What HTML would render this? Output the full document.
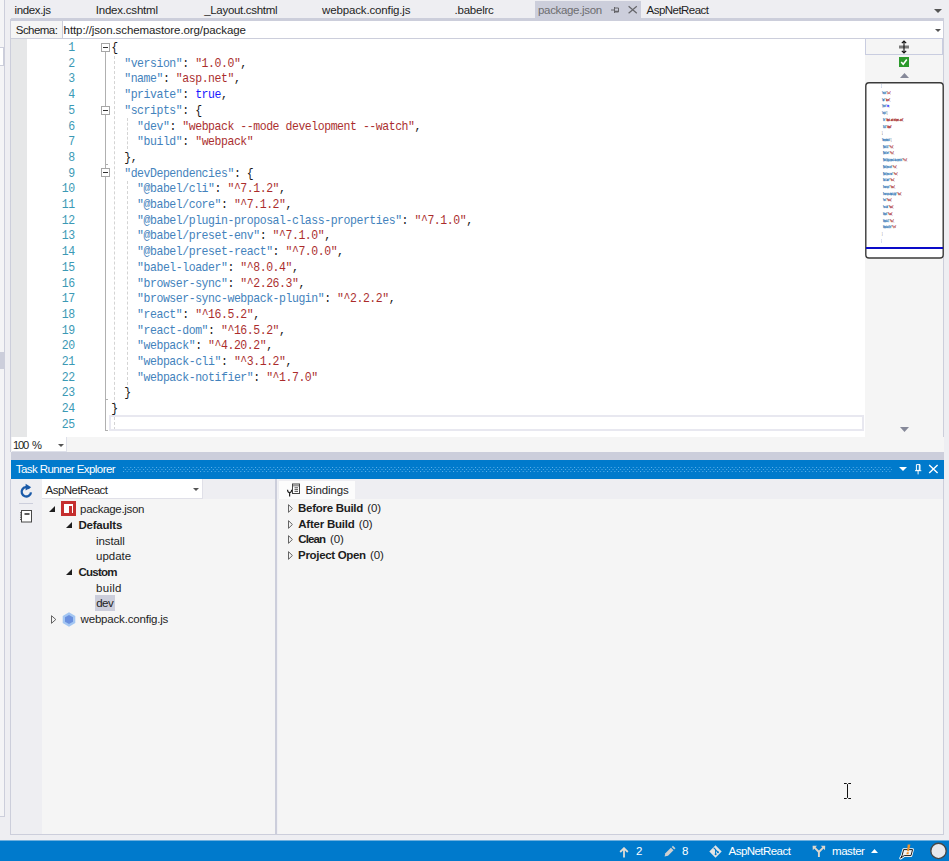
<!DOCTYPE html>
<html>
<head>
<meta charset="utf-8">
<title>package.json - AspNetReact</title>
<style>
html,body{margin:0;padding:0;}
body{width:949px;height:861px;overflow:hidden;position:relative;background:#eeeef2;font-family:"Liberation Sans",sans-serif;font-size:12px;color:#1e1e1e;}
.a{position:absolute;}
.t{position:absolute;white-space:nowrap;line-height:16px;height:16px;font-size:11.5px;}
.b{font-weight:bold;}
/* editor */
#editor{left:11px;top:39px;width:854px;height:398px;background:#fff;overflow:hidden;}
.cl,.ln{position:absolute;font-family:"Liberation Mono",monospace;font-size:11.5px;line-height:16px;height:16px;white-space:pre;letter-spacing:-0.45px;transform:scaleY(1.09);transform-origin:0 50%;}
.cl{left:111.3px;opacity:.9}
.ln{opacity:.92;left:39.2px;width:35.5px;text-align:right;color:#2b91af;}
.k{color:#2e75b6}.v{color:#a31515}.b2{color:#00f}.p{color:#000}
.cl .b{color:#0000ff;font-weight:normal}
.fold{position:absolute;width:7px;height:7px;border:1px solid #a6a6a6;background:#fff;}
.fold:after{content:"";position:absolute;left:1px;top:3px;width:5px;height:1px;background:#333;}
.ml{position:absolute;left:881px;font-family:"Liberation Mono",monospace;font-size:11.5px;font-weight:bold;line-height:16px;height:16px;white-space:pre;letter-spacing:-0.45px;transform:scale(0.0729,0.27);transform-origin:0 50%;-webkit-text-stroke:1.1px currentColor}
.ml .b{color:#00f}.ml .p{color:#777}
</style>
</head>
<body>

<!-- left strip -->
<div class="a" style="left:0;top:0;width:4px;height:816px;background:#f4f4f6"></div>
<div class="a" style="left:4px;top:0;width:1px;height:816px;background:#cccedb"></div>
<div class="a" style="left:0;top:47px;width:3px;height:17px;background:#fff;border-top:1px solid #cccedb;border-bottom:1px solid #cccedb;border-right:1px solid #cccedb"></div>
<div class="a" style="left:0;top:352px;width:4px;height:17px;background:#cccedb"></div>
<div class="a" style="left:0;top:816px;width:5px;height:1px;background:#cccedb"></div>

<!-- tab strip -->
<div class="a" style="left:11px;top:0;width:933px;height:18px;background:#eeeef2"></div>
<div class="a" style="left:535px;top:1px;width:106px;height:18px;background:#cccedb"></div>
<div class="a" style="left:11px;top:18px;width:933px;height:3px;background:#cccedb"></div>
<div class="t" id="tab1" style="left:14.5px;top:2px;letter-spacing:-0.37px">index.js</div>
<div class="t" id="tab2" style="left:95.7px;top:2px;letter-spacing:-0.20px">Index.cshtml</div>
<div class="t" id="tab3" style="left:204.2px;top:2px;letter-spacing:-0.31px">_Layout.cshtml</div>
<div class="t" id="tab4" style="left:322.0px;top:2px;letter-spacing:-0.14px">webpack.config.js</div>
<div class="t" id="tab5" style="left:454.5px;top:2px;letter-spacing:-0.22px">.babelrc</div>
<div class="t" id="tab6" style="left:538.0px;top:2px;color:#6d6d70;letter-spacing:-0.33px">package.json</div>
<div class="t" id="tab7" style="left:646.6px;top:2px;letter-spacing:-0.54px">AspNetReact</div>
<svg class="a" style="left:610px;top:5px" width="11" height="10" viewBox="0 0 11 10"><path d="M1 5H4.5M4.5 2V8M4.5 3H8.5V7M4.5 6.8H8.5" stroke="#66666a" stroke-width="1" fill="none"/><path d="M4.5 6.5H8.5" stroke="#66666a" stroke-width="1.6"/></svg>
<svg class="a" style="left:628px;top:5px" width="10" height="10" viewBox="0 0 10 10"><path d="M0.6 1.2L8.8 8.2M8.8 1.2L0.6 8.2" stroke="#66666a" stroke-width="1.2" fill="none"/></svg>
<svg class="a" style="left:934px;top:9px" width="8" height="4" viewBox="0 0 8 4"><path d="M0 0H8L4 4Z" fill="#555"/></svg>

<!-- schema row -->
<div class="a" style="left:11px;top:21px;width:51px;height:17px;background:#f5f5f5"></div>
<div class="a" style="left:62px;top:21px;width:881px;height:17px;background:#fff;border-left:1px solid #cccedb"></div>
<div class="a" style="left:11px;top:38px;width:933px;height:1px;background:#cccedb"></div>
<div class="a" style="left:10px;top:19px;width:1px;height:433px;background:#cccedb"></div>
<div class="a" style="left:943px;top:19px;width:1px;height:433px;background:#cccedb"></div>
<div class="t" id="schl" style="left:15.8px;top:22px;letter-spacing:-0.55px">Schema:</div>
<div class="t" id="schu" style="left:63.6px;top:22px;letter-spacing:-0.09px">http://json.schemastore.org/package</div>
<svg class="a" style="left:935px;top:29px" width="6" height="3" viewBox="0 0 6 3"><path d="M0 0H6L3 3Z" fill="#555"/></svg>

<!-- editor -->
<div class="a" id="editor">
</div>
<div class="a" style="left:11px;top:39px;width:16px;height:398px;background:#e6e7e8"></div>
<div class="a" style="left:105px;top:51px;width:1px;height:380px;background:#b0b0b0"></div>
<div class="a" style="left:105px;top:164px;width:3px;height:1px;background:#b0b0b0"></div>
<div class="a" style="left:105px;top:399px;width:3px;height:1px;background:#b0b0b0"></div>
<div class="a" style="left:105px;top:430px;width:3px;height:1px;background:#b0b0b0"></div>
<div class="a" style="left:114px;top:56px;width:0;height:374px;border-left:1px dashed #d4d4d4"></div>
<div class="a" style="left:127px;top:118px;width:0;height:31px;border-left:1px dashed #d4d4d4"></div>
<div class="a" style="left:127px;top:181px;width:0;height:204px;border-left:1px dashed #d4d4d4"></div>
<div class="fold" style="left:101px;top:43px"></div>
<div class="fold" style="left:101px;top:106px"></div>
<div class="fold" style="left:101px;top:168px"></div>
<div class="a" style="left:109px;top:415px;width:751px;height:12px;border:2px solid #e8e8f0"></div>
<div class="ln" style="top:40.00px">1</div>
<div class="ln" style="top:55.70px">2</div>
<div class="ln" style="top:71.40px">3</div>
<div class="ln" style="top:87.10px">4</div>
<div class="ln" style="top:102.80px">5</div>
<div class="ln" style="top:118.50px">6</div>
<div class="ln" style="top:134.20px">7</div>
<div class="ln" style="top:149.90px">8</div>
<div class="ln" style="top:165.60px">9</div>
<div class="ln" style="top:181.30px">10</div>
<div class="ln" style="top:197.00px">11</div>
<div class="ln" style="top:212.70px">12</div>
<div class="ln" style="top:228.40px">13</div>
<div class="ln" style="top:244.10px">14</div>
<div class="ln" style="top:259.80px">15</div>
<div class="ln" style="top:275.50px">16</div>
<div class="ln" style="top:291.20px">17</div>
<div class="ln" style="top:306.90px">18</div>
<div class="ln" style="top:322.60px">19</div>
<div class="ln" style="top:338.30px">20</div>
<div class="ln" style="top:354.00px">21</div>
<div class="ln" style="top:369.70px">22</div>
<div class="ln" style="top:385.40px">23</div>
<div class="ln" style="top:401.10px">24</div>
<div class="ln" style="top:416.80px">25</div>
<div class="cl" style="top:40.00px"><span class="p">{</span></div>
<div class="cl" style="top:55.70px">  <span class="k">&quot;version&quot;</span><span class="p">: </span><span class="v">&quot;1.0.0&quot;</span><span class="p">,</span></div>
<div class="cl" style="top:71.40px">  <span class="k">&quot;name&quot;</span><span class="p">: </span><span class="v">&quot;asp.net&quot;</span><span class="p">,</span></div>
<div class="cl" style="top:87.10px">  <span class="k">&quot;private&quot;</span><span class="p">: </span><span class="b">true</span><span class="p">,</span></div>
<div class="cl" style="top:102.80px">  <span class="k">&quot;scripts&quot;</span><span class="p">: {</span></div>
<div class="cl" style="top:118.50px">    <span class="k">&quot;dev&quot;</span><span class="p">: </span><span class="v">&quot;webpack --mode development --watch&quot;</span><span class="p">,</span></div>
<div class="cl" style="top:134.20px">    <span class="k">&quot;build&quot;</span><span class="p">: </span><span class="v">&quot;webpack&quot;</span></div>
<div class="cl" style="top:149.90px">  <span class="p">},</span></div>
<div class="cl" style="top:165.60px">  <span class="k">&quot;devDependencies&quot;</span><span class="p">: {</span></div>
<div class="cl" style="top:181.30px">    <span class="k">&quot;@babel/cli&quot;</span><span class="p">: </span><span class="v">&quot;^7.1.2&quot;</span><span class="p">,</span></div>
<div class="cl" style="top:197.00px">    <span class="k">&quot;@babel/core&quot;</span><span class="p">: </span><span class="v">&quot;^7.1.2&quot;</span><span class="p">,</span></div>
<div class="cl" style="top:212.70px">    <span class="k">&quot;@babel/plugin-proposal-class-properties&quot;</span><span class="p">: </span><span class="v">&quot;^7.1.0&quot;</span><span class="p">,</span></div>
<div class="cl" style="top:228.40px">    <span class="k">&quot;@babel/preset-env&quot;</span><span class="p">: </span><span class="v">&quot;^7.1.0&quot;</span><span class="p">,</span></div>
<div class="cl" style="top:244.10px">    <span class="k">&quot;@babel/preset-react&quot;</span><span class="p">: </span><span class="v">&quot;^7.0.0&quot;</span><span class="p">,</span></div>
<div class="cl" style="top:259.80px">    <span class="k">&quot;babel-loader&quot;</span><span class="p">: </span><span class="v">&quot;^8.0.4&quot;</span><span class="p">,</span></div>
<div class="cl" style="top:275.50px">    <span class="k">&quot;browser-sync&quot;</span><span class="p">: </span><span class="v">&quot;^2.26.3&quot;</span><span class="p">,</span></div>
<div class="cl" style="top:291.20px">    <span class="k">&quot;browser-sync-webpack-plugin&quot;</span><span class="p">: </span><span class="v">&quot;^2.2.2&quot;</span><span class="p">,</span></div>
<div class="cl" style="top:306.90px">    <span class="k">&quot;react&quot;</span><span class="p">: </span><span class="v">&quot;^16.5.2&quot;</span><span class="p">,</span></div>
<div class="cl" style="top:322.60px">    <span class="k">&quot;react-dom&quot;</span><span class="p">: </span><span class="v">&quot;^16.5.2&quot;</span><span class="p">,</span></div>
<div class="cl" style="top:338.30px">    <span class="k">&quot;webpack&quot;</span><span class="p">: </span><span class="v">&quot;^4.20.2&quot;</span><span class="p">,</span></div>
<div class="cl" style="top:354.00px">    <span class="k">&quot;webpack-cli&quot;</span><span class="p">: </span><span class="v">&quot;^3.1.2&quot;</span><span class="p">,</span></div>
<div class="cl" style="top:369.70px">    <span class="k">&quot;webpack-notifier&quot;</span><span class="p">: </span><span class="v">&quot;^1.7.0&quot;</span></div>
<div class="cl" style="top:385.40px">  <span class="p">}</span></div>
<div class="cl" style="top:401.10px"><span class="p">}</span></div>
<div class="cl" style="top:416.80px"></div>

<!-- scroll map -->
<div class="a" style="left:865px;top:39px;width:78px;height:398px;background:#f5f5f5"></div>
<div class="a" style="left:865px;top:38px;width:78px;height:16px;background:#f5f5f5;border:1px solid #c9cde0;box-sizing:border-box;height:17px"></div>
<svg class="a" style="left:897px;top:40px" width="14" height="14" viewBox="0 0 14 14"><rect x="2" y="5.5" width="10" height="3" fill="#7a7a7a"/><path d="M7 1V13M4.8 3.2L7 1L9.2 3.2M4.8 10.8L7 13L9.2 10.8" stroke="#111" stroke-width="1.1" fill="none"/></svg>
<div class="a" style="left:899px;top:57px;width:10px;height:10px;background:#2c9a2c"></div>
<svg class="a" style="left:899px;top:57px" width="10" height="10" viewBox="0 0 10 10"><path d="M2.2 5L4.2 7.2L7.8 2.5" stroke="#fff" stroke-width="1.6" fill="none"/></svg>
<svg class="a" style="left:900px;top:73px" width="9" height="5" viewBox="0 0 9 5"><path d="M0 5L4.5 0L9 5Z" fill="#868999"/></svg>
<svg class="a" style="left:864px;top:81px" width="81" height="179" viewBox="0 0 81 179"><rect x="1.8" y="1.7" width="77.4" height="175.3" rx="3.2" fill="#fff" stroke="#3a3a3a" stroke-width="1.4"/></svg>
<div class="a" style="left:866px;top:247px;width:77px;height:2px;background:#0a0ac8"></div>
<div class="mm">
<div class="ml" style="top:78.30px"><span class="p">{</span></div>
<div class="ml" style="top:85.01px">  <span class="k">&quot;version&quot;</span><span class="p">: </span><span class="v">&quot;1.0.0&quot;</span><span class="p">,</span></div>
<div class="ml" style="top:91.72px">  <span class="k">&quot;name&quot;</span><span class="p">: </span><span class="v">&quot;asp.net&quot;</span><span class="p">,</span></div>
<div class="ml" style="top:98.43px">  <span class="k">&quot;private&quot;</span><span class="p">: </span><span class="b">true</span><span class="p">,</span></div>
<div class="ml" style="top:105.14px">  <span class="k">&quot;scripts&quot;</span><span class="p">: {</span></div>
<div class="ml" style="top:111.85px">    <span class="k">&quot;dev&quot;</span><span class="p">: </span><span class="v">&quot;webpack --mode development --watch&quot;</span><span class="p">,</span></div>
<div class="ml" style="top:118.56px">    <span class="k">&quot;build&quot;</span><span class="p">: </span><span class="v">&quot;webpack&quot;</span></div>
<div class="ml" style="top:125.27px">  <span class="p">},</span></div>
<div class="ml" style="top:131.98px">  <span class="k">&quot;devDependencies&quot;</span><span class="p">: {</span></div>
<div class="ml" style="top:138.69px">    <span class="k">&quot;@babel/cli&quot;</span><span class="p">: </span><span class="v">&quot;^7.1.2&quot;</span><span class="p">,</span></div>
<div class="ml" style="top:145.40px">    <span class="k">&quot;@babel/core&quot;</span><span class="p">: </span><span class="v">&quot;^7.1.2&quot;</span><span class="p">,</span></div>
<div class="ml" style="top:152.11px">    <span class="k">&quot;@babel/plugin-proposal-class-properties&quot;</span><span class="p">: </span><span class="v">&quot;^7.1.0&quot;</span><span class="p">,</span></div>
<div class="ml" style="top:158.82px">    <span class="k">&quot;@babel/preset-env&quot;</span><span class="p">: </span><span class="v">&quot;^7.1.0&quot;</span><span class="p">,</span></div>
<div class="ml" style="top:165.53px">    <span class="k">&quot;@babel/preset-react&quot;</span><span class="p">: </span><span class="v">&quot;^7.0.0&quot;</span><span class="p">,</span></div>
<div class="ml" style="top:172.24px">    <span class="k">&quot;babel-loader&quot;</span><span class="p">: </span><span class="v">&quot;^8.0.4&quot;</span><span class="p">,</span></div>
<div class="ml" style="top:178.95px">    <span class="k">&quot;browser-sync&quot;</span><span class="p">: </span><span class="v">&quot;^2.26.3&quot;</span><span class="p">,</span></div>
<div class="ml" style="top:185.66px">    <span class="k">&quot;browser-sync-webpack-plugin&quot;</span><span class="p">: </span><span class="v">&quot;^2.2.2&quot;</span><span class="p">,</span></div>
<div class="ml" style="top:192.37px">    <span class="k">&quot;react&quot;</span><span class="p">: </span><span class="v">&quot;^16.5.2&quot;</span><span class="p">,</span></div>
<div class="ml" style="top:199.08px">    <span class="k">&quot;react-dom&quot;</span><span class="p">: </span><span class="v">&quot;^16.5.2&quot;</span><span class="p">,</span></div>
<div class="ml" style="top:205.79px">    <span class="k">&quot;webpack&quot;</span><span class="p">: </span><span class="v">&quot;^4.20.2&quot;</span><span class="p">,</span></div>
<div class="ml" style="top:212.50px">    <span class="k">&quot;webpack-cli&quot;</span><span class="p">: </span><span class="v">&quot;^3.1.2&quot;</span><span class="p">,</span></div>
<div class="ml" style="top:219.21px">    <span class="k">&quot;webpack-notifier&quot;</span><span class="p">: </span><span class="v">&quot;^1.7.0&quot;</span></div>
<div class="ml" style="top:225.92px">  <span class="p">}</span></div>
<div class="ml" style="top:232.63px"><span class="p">}</span></div>
</div>
<svg class="a" style="left:900px;top:427px" width="9" height="5" viewBox="0 0 9 5"><path d="M0 0H9L4.5 5Z" fill="#868999"/></svg>

<!-- below editor: zoom + hscroll -->
<div class="a" style="left:11px;top:437px;width:933px;height:15px;background:#f5f5f5"></div>
<div class="a" style="left:12px;top:437px;width:54px;height:14px;background:#fff;border:1px solid #dfe1ea;border-top:none;border-left:none"></div>
<div class="t" id="zoom" style="left:13.0px;top:436.5px;word-spacing:2px;font-size:11.2px;letter-spacing:-1.18px">100 %</div>
<svg class="a" style="left:58.3px;top:444px" width="6" height="3" viewBox="0 0 6 3"><path d="M0 0H6L3 3Z" fill="#555"/></svg>

<!-- splitter strip -->
<div class="a" style="left:11px;top:452px;width:933px;height:8px;background:#cccedb"></div>

<!-- Task runner panel -->
<div class="a" style="left:11px;top:460px;width:933px;height:19px;background:#007acc"></div>
<div class="t" id="trx" style="left:15.8px;top:461px;color:#fff;letter-spacing:-0.57px">Task Runner Explorer</div>
<svg class="a" id="grip" style="left:123px;top:467px" width="769" height="5" viewBox="0 0 769 5"><defs><pattern id="gp" width="3.667" height="4" patternUnits="userSpaceOnUse"><rect x="0" y="0" width="1" height="1" fill="#5db0ea"/><rect x="1.83" y="2" width="1" height="1" fill="#5db0ea"/></pattern></defs><rect width="769" height="5" fill="url(#gp)"/></svg>
<svg class="a" style="left:899px;top:467px" width="8" height="4" viewBox="0 0 8 4"><path d="M0 0H8L4 4Z" fill="#fff"/></svg>
<svg class="a" style="left:913px;top:463px" width="10" height="13" viewBox="0 0 10 13"><path d="M3.4 1.6H7V7.4H3.4ZM6.3 1.6V7.4M2 7.7H8.3M5.1 7.7V11.4" stroke="#fff" stroke-width="1" fill="none"/></svg>
<svg class="a" style="left:928px;top:464px" width="11" height="11" viewBox="0 0 11 11"><path d="M1.2 1.1L9.6 9M9.6 1.1L1.2 9" stroke="#fff" stroke-width="1.4" fill="none"/></svg>

<div class="a" style="left:11px;top:479px;width:933px;height:20px;background:#eeeef2"></div>
<div class="a" style="left:11px;top:499px;width:31px;height:335px;background:#eeeef2"></div>
<div class="a" style="left:42px;top:499px;width:233px;height:335px;background:#f5f5f5"></div>
<div class="a" style="left:278px;top:499px;width:665px;height:335px;background:#f5f5f5"></div>
<div class="a" style="left:275px;top:479px;width:2px;height:355px;background:#cccedb"></div><div class="a" style="left:277px;top:479px;width:1px;height:355px;background:#f0f0f4"></div>
<div class="a" style="left:10px;top:479px;width:1px;height:356px;background:#cccedb"></div>
<div class="a" style="left:943px;top:479px;width:1px;height:356px;background:#cccedb"></div>
<div class="a" style="left:10px;top:834px;width:934px;height:1px;background:#cccedb"></div>

<!-- toolbar icons -->
<svg class="a" style="left:19px;top:483px" width="15" height="16" viewBox="0 0 15 16"><path d="M10.6 5.4A4.7 4.7 0 1 0 12 9.4" stroke="#1a5aa8" stroke-width="2.3" fill="none"/><path d="M6.6 0.8L12.2 4.2L6.6 7.4Z" fill="#1a5aa8"/></svg>
<div class="a" style="left:19px;top:503px;width:14px;height:1px;background:#cccedb"></div>
<svg class="a" style="left:19px;top:509px" width="14" height="14" viewBox="0 0 14 14"><rect x="2.5" y="1.5" width="10" height="11.5" fill="#fdfdfd" stroke="#484848" stroke-width="1"/><path d="M1 3.8H3M1 6H3M1 8.2H3M1 10.4H3" stroke="#484848" stroke-width="1"/><rect x="5.5" y="4.2" width="5" height="1.6" fill="#333"/></svg>

<!-- combo -->
<div class="a" style="left:42px;top:479px;width:160px;height:19px;background:#fff;border-right:1px solid #e0e0e8;border-bottom:1px solid #e0e0e8"></div>
<div class="t" id="combo" style="left:45.6px;top:482px;letter-spacing:-0.54px">AspNetReact</div>
<svg class="a" style="left:193px;top:488px" width="6" height="3" viewBox="0 0 6 3"><path d="M0 0H6L3 3Z" fill="#555"/></svg>

<!-- tree -->
<svg class="a" style="left:49px;top:506px" width="6" height="6" viewBox="0 0 6 6"><path d="M6 0V6H0Z" fill="#1e1e1e"/></svg>
<div class="a" style="left:61px;top:501px;width:15px;height:15px;background:#c52f2f"></div>
<div class="a" style="left:64px;top:504px;width:9px;height:9px;background:#fff"></div>
<div class="a" style="left:69px;top:506px;width:2.5px;height:7px;background:#c52f2f"></div>
<div class="t" id="tr1" style="left:80.1px;top:500.6px;letter-spacing:-0.31px">package.json</div>
<svg class="a" style="left:66px;top:522px" width="6" height="6" viewBox="0 0 6 6"><path d="M6 0V6H0Z" fill="#1e1e1e"/></svg>
<div class="t b" id="tr2" style="left:78.5px;top:516.6px;letter-spacing:-0.22px">Defaults</div>
<div class="t" id="tr3" style="left:96.0px;top:532.6px;letter-spacing:-0.09px">install</div>
<div class="t" id="tr4" style="left:96.0px;top:547.6px;letter-spacing:-0.02px">update</div>
<svg class="a" style="left:66px;top:569px" width="6" height="6" viewBox="0 0 6 6"><path d="M6 0V6H0Z" fill="#1e1e1e"/></svg>
<div class="t b" id="tr5" style="left:78.5px;top:563.6px;letter-spacing:-0.75px">Custom</div>
<div class="t" id="tr6" style="left:96.0px;top:579.6px;letter-spacing:0.30px">build</div>
<div class="a" style="left:95px;top:595px;width:20px;height:16px;background:#cccedb"></div>
<div class="t" id="tr7" style="left:96.2px;top:594.6px;letter-spacing:-0.47px">dev</div>
<svg class="a" style="left:51px;top:615px" width="6" height="9" viewBox="0 0 6 9"><path d="M0.5 0.7V8.3L4.8 4.5Z" stroke="#4a4a4a" stroke-width="0.85" fill="none"/></svg>
<svg class="a" style="left:62px;top:612px" width="14" height="15" viewBox="0 0 14 15"><path d="M7 0.3L13.3 3.9V11.1L7 14.7L0.7 11.1V3.9Z" fill="#a3c6f2"/><path d="M7 3L11 5.3V9.7L7 12L3 9.7V5.3Z" fill="#6a90df"/></svg>
<div class="t" id="tr8" style="left:80.6px;top:610.6px;letter-spacing:-0.19px">webpack.config.js</div>

<!-- bindings -->
<div class="a" style="left:279px;top:481px;width:76px;height:18px;background:#fcfcfc"></div>
<svg class="a" style="left:286px;top:483px" width="15" height="15" viewBox="0 0 15 15"><rect x="6.5" y="1" width="7" height="9.5" fill="#fff" stroke="#444" stroke-width="1"/><rect x="7" y="1.5" width="6" height="2" fill="#999"/><path d="M8.5 4.8H12M8.5 6.6H12M8.5 8.4H12" stroke="#444" stroke-width="0.9"/><path d="M1.5 6.8Q1.7 9.6 3.6 9.6Q5.5 9.6 5.7 6.8M3.6 9.6V13.6" stroke="#222" stroke-width="1.2" fill="none"/></svg>
<div class="t" id="bind" style="left:305.5px;top:482px;letter-spacing:-0.13px">Bindings</div>
<svg class="a" style="left:288px;top:504px" width="5" height="9" viewBox="0 0 5 9"><path d="M0.5 0.7V8.3L4.4 4.5Z" stroke="#4a4a4a" stroke-width="0.85" fill="none"/></svg>
<svg class="a" style="left:288px;top:520px" width="5" height="9" viewBox="0 0 5 9"><path d="M0.5 0.7V8.3L4.4 4.5Z" stroke="#4a4a4a" stroke-width="0.85" fill="none"/></svg>
<svg class="a" style="left:288px;top:535px" width="5" height="9" viewBox="0 0 5 9"><path d="M0.5 0.7V8.3L4.4 4.5Z" stroke="#4a4a4a" stroke-width="0.85" fill="none"/></svg>
<svg class="a" style="left:288px;top:551px" width="5" height="9" viewBox="0 0 5 9"><path d="M0.5 0.7V8.3L4.4 4.5Z" stroke="#4a4a4a" stroke-width="0.85" fill="none"/></svg>
<div class="t b" id="b1" style="left:298.1px;top:500px;letter-spacing:-0.29px">Before Build</div><div class="t" id="b1n" style="left:367.2px;top:500px;letter-spacing:-0.11px">(0)</div>
<div class="t b" id="b2" style="left:298.2px;top:516px;letter-spacing:-0.21px">After Build</div><div class="t" id="b2n" style="left:358.8px;top:516px;letter-spacing:-0.17px">(0)</div>
<div class="t b" id="b3" style="left:298.2px;top:531px;letter-spacing:-0.84px">Clean</div><div class="t" id="b3n" style="left:330.1px;top:531px;letter-spacing:-0.11px">(0)</div>
<div class="t b" id="b4" style="left:298.1px;top:547px;letter-spacing:-0.33px">Project Open</div><div class="t" id="b4n" style="left:370.1px;top:547px;letter-spacing:-0.11px">(0)</div>

<!-- cursor -->
<svg class="a" style="left:843px;top:783px" width="9" height="17" viewBox="0 0 9 17"><path d="M1 0.5H3.5L4.5 1.5L5.5 0.5H8M1 15.5H3.5L4.5 14.5L5.5 15.5H8M4.5 1.5V14.5" stroke="#111" stroke-width="1" fill="none"/></svg>

<!-- status bar -->
<div class="a" style="left:0;top:840px;width:949px;height:21px;background:#007acc;border-top:1px solid #6fb0de;box-sizing:border-box"></div>
<svg class="a" style="left:618.5px;top:846.5px" width="10" height="11" viewBox="0 0 10 11"><path d="M5 1.2V10.6M1.2 5L5 1.2L8.8 5" stroke="#e2ddd6" stroke-width="1.8" fill="none"/></svg>
<div class="t" id="s1" style="left:636.0px;top:843.4px;color:#fff">2</div>
<svg class="a" style="left:664px;top:845px" width="12" height="12" viewBox="0 0 12 12"><path d="M0.6 11.6L1.4 8.2L6.9 2.7L9.5 5.3L4 10.8Z" fill="#cfcfcf"/><path d="M7.7 1.9L8.9 0.7L11.5 3.3L10.3 4.5Z" fill="#cfcfcf"/></svg>
<div class="t" id="s2" style="left:682.0px;top:843.4px;color:#fff">8</div>
<svg class="a" style="left:709px;top:845px" width="13" height="13" viewBox="0 0 13 13"><path d="M6.5 0.3L12.7 6.5L6.5 12.7L0.3 6.5Z" fill="#e4e4e4"/><path d="M4.6 2.6L6.6 4.6V9M6.6 4.8L8.8 7" stroke="#007acc" stroke-width="1.1" fill="none"/><circle cx="6.6" cy="9.2" r="1" fill="#007acc"/><circle cx="9" cy="7.2" r="1" fill="#007acc"/></svg>
<div class="t" id="s3" style="left:728.6px;top:843.4px;color:#fff;letter-spacing:-0.55px">AspNetReact</div>
<svg class="a" style="left:812px;top:845px" width="14" height="13" viewBox="0 0 14 13"><path d="M2.6 2.6L6.9 7V12M11.2 2.6L6.9 7" stroke="#ddd6cc" stroke-width="1.9" fill="none"/><path d="M0.6 0.8H5L0.8 5.2ZM13.2 0.8H8.8L13 5.2Z" fill="#ddd6cc"/></svg>
<div class="t" id="s4" style="left:832.0px;top:843.4px;color:#fff;letter-spacing:-0.44px">master</div>
<svg class="a" style="left:871px;top:849px" width="7" height="4" viewBox="0 0 7 4"><path d="M0 4L3.5 0L7 4Z" fill="#fff"/></svg>
<svg class="a" style="left:899px;top:843px" width="16" height="17" viewBox="0 0 16 17"><path d="M4.6 6.6H13.6L12 12.6H5.2L1.6 15.2L3.1 12.4Z" fill="none" stroke="#fff" stroke-width="2.6" stroke-linejoin="round"/><path d="M4.6 6.6H13.6L12 12.6H5.2L1.6 15.2L3.1 12.4Z" fill="#f2f2f2" stroke="#1b1b1b" stroke-width="1"/><path d="M8.7 1.6L11.4 1.6L9.9 8.2L8.1 8.2Z" fill="#f0922a"/><path d="M7.8 9.2L9.9 9.2L9.5 11.2L7.4 11.2Z" fill="#f0922a"/></svg>
<svg class="a" style="left:928px;top:841px" width="21" height="20" viewBox="0 0 21 20"><circle cx="10.5" cy="9.9" r="7.7" fill="#e8e8ec" stroke="#474747" stroke-width="1.4"/></svg>

</body>
</html>
